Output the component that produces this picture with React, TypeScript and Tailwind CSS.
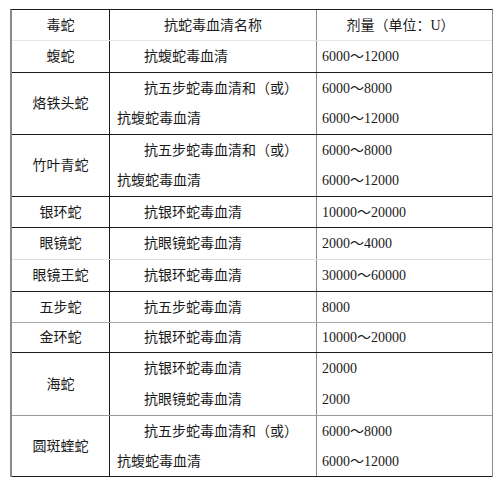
const font = { fontFamily: '"Liberation Serif", "Noto Sans CJK SC", serif' };

type Line = { text: string; indent: boolean; dose: string };
type Row = { name: string; h: string; border: string; lines: Line[] };

const rows: Row[] = [
  { name: '蝮蛇', h: 'h-[32px]', border: 'border-[#1a1a1a]', lines: [{ text: '抗蝮蛇毒血清', indent: true, dose: '6000～12000' }] },
  {
    name: '烙铁头蛇', h: 'h-[62px]', border: 'border-[#1a1a1a]',
    lines: [
      { text: '抗五步蛇毒血清和（或）', indent: true, dose: '6000～8000' },
      { text: '抗蝮蛇毒血清', indent: false, dose: '6000～12000' },
    ],
  },
  {
    name: '竹叶青蛇', h: 'h-[62px]', border: 'border-[#1a1a1a]',
    lines: [
      { text: '抗五步蛇毒血清和（或）', indent: true, dose: '6000～8000' },
      { text: '抗蝮蛇毒血清', indent: false, dose: '6000～12000' },
    ],
  },
  { name: '银环蛇', h: 'h-[31px]', border: 'border-[#1a1a1a]', lines: [{ text: '抗银环蛇毒血清', indent: true, dose: '10000～20000' }] },
  { name: '眼镜蛇', h: 'h-[32px]', border: 'border-[#dcdcdc]', lines: [{ text: '抗眼镜蛇毒血清', indent: true, dose: '2000～4000' }] },
  { name: '眼镜王蛇', h: 'h-[32px]', border: 'border-[#1a1a1a]', lines: [{ text: '抗银环蛇毒血清', indent: true, dose: '30000～60000' }] },
  { name: '五步蛇', h: 'h-[31px]', border: 'border-[#a8a8a8]', lines: [{ text: '抗五步蛇毒血清', indent: true, dose: '8000' }] },
  { name: '金环蛇', h: 'h-[30px]', border: 'border-[#1a1a1a]', lines: [{ text: '抗银环蛇毒血清', indent: true, dose: '10000～20000' }] },
  {
    name: '海蛇', h: 'h-[63px]', border: 'border-[#9a9a9a]',
    lines: [
      { text: '抗银环蛇毒血清', indent: true, dose: '20000' },
      { text: '抗眼镜蛇毒血清', indent: true, dose: '2000' },
    ],
  },
  {
    name: '圆斑蝰蛇', h: 'h-[61px]', border: 'border-[#1a1a1a]',
    lines: [
      { text: '抗五步蛇毒血清和（或）', indent: true, dose: '6000～8000' },
      { text: '抗蝮蛇毒血清', indent: false, dose: '6000～12000' },
    ],
  },
];

export default function App() {
  return (
    <div className="w-[500px] h-[488px] bg-white pt-[9px] pl-[10px] text-[14px] text-[#1a1a1a]" style={font}>
      <div className="w-[483px] border-t border-t-[#1a1a1a] border-l-2 border-l-[#8a8a8a] border-r border-r-[#8a8a8a]">
        {/* header */}
        <div className="flex h-[31px] border-b border-[#e6e6e6]">
          <div className="w-[98px] border-r border-[#1a1a1a] flex items-center justify-center">毒蛇</div>
          <div className="w-[207px] border-r border-[#8a8a8a] flex items-center justify-center">抗蛇毒血清名称</div>
          <div className="flex-1 flex items-center justify-center pr-[8px]">剂量（单位：U）</div>
        </div>

        {rows.map((row) => (
          <div key={row.name} className={`flex border-b ${row.h} ${row.border}`}>
            <div className="w-[98px] border-r border-[#1a1a1a] flex items-center justify-center">{row.name}</div>
            <div className="w-[207px] border-r border-[#8a8a8a] flex flex-col">
              {row.lines.map((l, i) => (
                <div key={i} className={`flex-1 flex items-center ${l.indent ? 'pl-[34px]' : 'pl-[7px]'}`}>
                  {l.text}
                </div>
              ))}
            </div>
            <div className="flex-1 flex flex-col">
              {row.lines.map((l, i) => (
                <div key={i} className="flex-1 flex items-center pl-[5px]">
                  {l.dose}
                </div>
              ))}
            </div>
          </div>
        ))}
      </div>
    </div>
  );
}
